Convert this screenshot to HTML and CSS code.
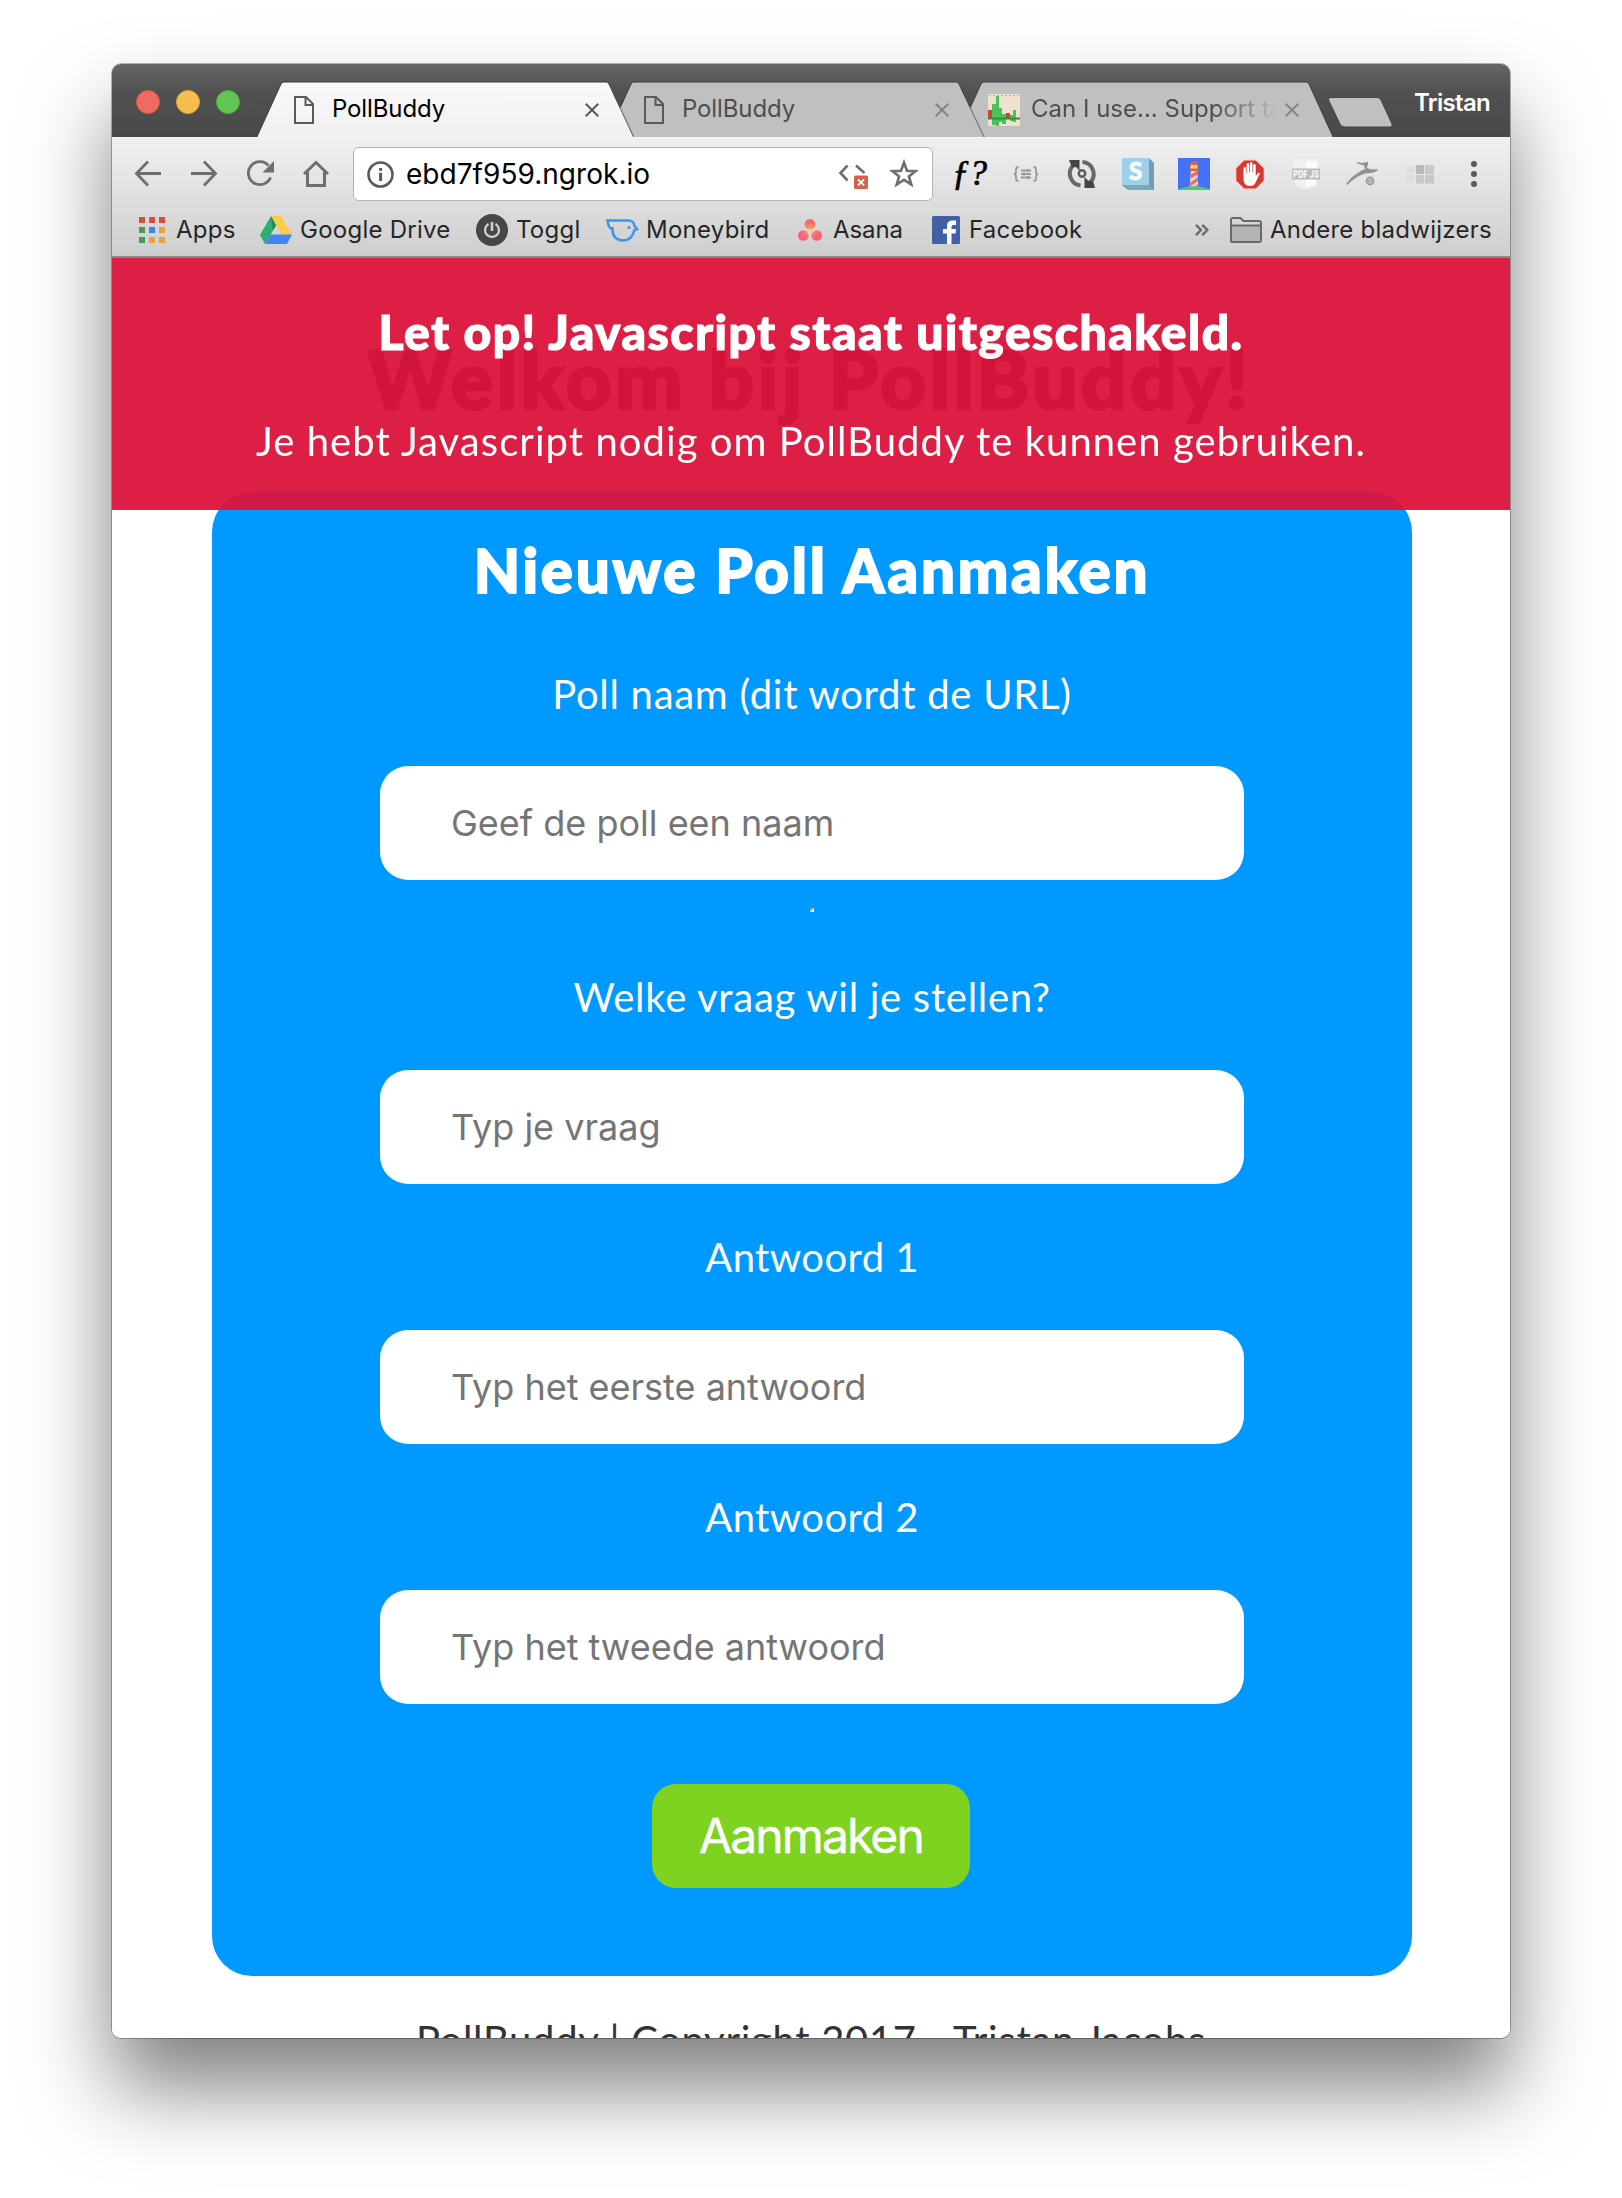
FILE: index.html
```html
<!DOCTYPE html>
<html lang="nl">
<head>
<meta charset="utf-8">
<title>PollBuddy</title>
<link rel="stylesheet" href="styles.css">
</head>
<body>
<div class="window">
  <header class="tabstrip">
    <svg class="tab-shapes" width="1398" height="73" viewBox="112 64 1398 73">
      <defs>
        <linearGradient id="active" x1="0" y1="0" x2="0" y2="1"><stop offset="0" stop-color="#f9f9f9"/><stop offset="1" stop-color="#f0f0f0"/></linearGradient>
      </defs>
      <path d="M955.500 140L981 84Q982 82 984 82H1306Q1308 82 1309 84L1334.500 140Z" fill="#c0c0c0" stroke="#3c3c3c"/>
      <path d="M605.500 140L631 84Q632 82 634 82H956Q958 82 959 84L985.500 140Z" fill="#c0c0c0" stroke="#3c3c3c"/>
      <path d="M970 107L984 137" stroke="#8c8c8c" fill="none"/>
      <path d="M255.500 140L281 84Q282 82 284 82H606Q608 82 609 84L635 140Z" fill="url(#active)" stroke="#3c3c3c"/>
      <path d="M620 107L634 137" stroke="#8c8c8c" fill="none"/>
      <path d="M1331 97.500H1377Q1380 97.500 1381 100L1392 124Q1393 127 1390 127H1345Q1341 127 1340 124L1328.500 100Q1328 97.500 1331 97.500Z" fill="#c0c0c0" stroke="#444"/>
    </svg>
    <div class="lights"><i class="light red"></i><i class="light amber"></i><i class="light green"></i></div>
    <div class="tab tab-1">
      <svg width="20" height="28" viewBox="0 0 20 28"><path d="M1 1H12L19 8V27H1ZM11.500 1V9H19" fill="none" stroke="#5a5a5a" stroke-width="2"/></svg>
      <span class="tab-title">PollBuddy</span>
      <svg class="close" width="14" height="14" viewBox="0 0 14 14"><path d="M.7.7L13.300 13.300M13.300.7L.7 13.300" stroke="#5a5a5a" stroke-width="2"/></svg>
    </div>
    <div class="tab tab-2">
      <svg width="20" height="28" viewBox="0 0 20 28"><path d="M1 1H12L19 8V27H1ZM11.500 1V9H19" fill="none" stroke="#5a5a5a" stroke-width="2"/></svg>
      <span class="tab-title dim">PollBuddy</span>
      <svg class="close" width="14" height="14" viewBox="0 0 14 14"><path d="M.7.7L13.300 13.300M13.300.7L.7 13.300" stroke="#858585" stroke-width="2"/></svg>
    </div>
    <div class="tab tab-3">
      <svg width="32" height="32" viewBox="0 0 32 32"><path fill="#eee2cf" d="M0 0H32V32H0Z"/><path d="M1 1.500H31" stroke="#c9a9a0" stroke-dasharray="2 2"/><path fill="#d0432f" d="M0 16H4V25H0ZM18 19H22V25H18Z"/><path fill="#47c35a" d="M4 10H8V31H4ZM8 2H11V32H8ZM11 14H14V28H11ZM14 20H18V30H14ZM22 21H25V27H22ZM25 16H28V28H25Z"/><path fill="#2f8d3f" d="M0 23.500H32V25.500H0Z"/></svg>
      <span class="tab-title dim fade">Can I use... Support ta</span>
      <svg class="close" width="14" height="14" viewBox="0 0 14 14"><path d="M.7.7L13.300 13.300M13.300.7L.7 13.300" stroke="#858585" stroke-width="2"/></svg>
    </div>
    <span class="profile">Tristan</span>
  </header>

  <div class="chrome">
    <nav class="toolbar">
      <svg class="nav-icons" width="196" height="30" viewBox="134 159 196 30">
        <g fill="none" stroke="#6e6e6e" stroke-width="2.800">
          <path d="M161 173.500H137M148 161.500L136.500 173.500L148 185.500"/>
          <path d="M191 173.500H215M204 161.500L215.500 173.500L204 185.500"/>
          <path d="M270.500 177.500A11.500 11.500 0 1 1 268.500 165.500"/>
          <path d="M304 174L316 162.500L328 174M307.500 172V185.500H324.500V172" stroke-width="3"/>
        </g>
        <path d="M274 161V172.500H262.500Z" fill="#6e6e6e"/>
      </svg>
      <div class="omnibox">
        <svg width="28" height="28" viewBox="0 0 28 28"><circle cx="14.500" cy="14.500" r="12" fill="none" stroke="#5a5a5a" stroke-width="2.600"/><path d="M13.100 8H16.100V10.700H13.100ZM13.100 12.800H16.100V21H13.100Z" fill="#5a5a5a"/></svg>
        <span class="url">ebd7f959.ngrok.io</span>
        <svg class="omni-actions" width="82" height="32" viewBox="838 159 82 32">
          <path d="M847.500 166.500L840.500 174L847.500 181.500M856 166.500L864.500 174" fill="none" stroke="#6e6e6e" stroke-width="2.600"/>
          <rect x="854" y="176.500" width="14" height="13.500" rx="1.500" fill="#d8604c"/><path d="M858 180.300L864 186.300M864 180.300L858 186.300" stroke="#fff" stroke-width="1.900"/>
          <path d="M904 163.500L907 171.700L915.500 172.100L908.900 177.400L911.300 185.600L904 180.900L896.700 185.600L899.100 177.400L892.500 172.100L901 171.700Z" fill="none" stroke="#6e6e6e" stroke-width="2.600"/>
        </svg>
      </div>
      <div class="extensions">
        <span class="fq">ƒ?</span>
        <svg width="26" height="16" viewBox="0 0 26 16"><g fill="none" stroke="#9a9a9a" stroke-width="1.800"><path d="M5.500 1Q3 1 3 3.500V6Q3 8 .8 8Q3 8 3 10V12.500Q3 15 5.500 15M20.500 1Q23 1 23 3.500V6Q23 8 25.200 8Q23 8 23 10V12.500Q23 15 20.500 15M8 4.500H18M8 8H18M8 11.500H18"/></g><path d="M14 3H16V6H14ZM10 6.500H12V9.500H10ZM14 10H16V13H14Z" fill="#9a9a9a"/></svg>
        <svg width="30" height="30" viewBox="0 0 30 30"><g fill="none" stroke="#686868" stroke-width="4"><path d="M13.500 26.500A12 12 0 0 1 6 6.500"/><path d="M15.500 3A12 12 0 0 1 24 22.500"/></g><path d="M2 1H12.500V11.500L9 8L5 8.500ZM17.500 29V18L21 21.500L26 22L28 29Z" fill="#454545"/><circle cx="15" cy="14.500" r="3.200" fill="none" stroke="#5d5d5d" stroke-width="2.500"/></svg>
        <svg width="32" height="32" viewBox="0 0 32 32"><path d="M27 0L32 5V32H6L0 27Z" fill="#6f9fb1"/><path d="M0 0H27V27H0Z" fill="#9fd0ea"/><path d="M0 27H27L32 32H6Z" fill="#7ba9b9"/><text x="13.500" y="21.500" text-anchor="middle" class="s-letter">S</text></svg>
        <svg width="32" height="32" viewBox="0 0 32 32"><path d="M0 0H32V32H0Z" fill="#4470fa"/><path d="M13 11H19L20.500 30H11.500Z" fill="#d9d4ef"/><path d="M12.800 16.500L19.300 13V16.500L12.600 20.500ZM12.200 24.500L19.900 19.500L20 23L12 28.500ZM13 30.500L20.400 26V30.500Z" fill="#ee7047"/><path d="M12.500 7H19.500V11H12.500Z" fill="#ffd95c"/><path d="M12 7Q12 3 16 3Q20 3 20 7ZM11.500 10.500H20.500V13H11.500Z" fill="#e5603d"/><path d="M0 32V31Q16 25.500 32 31V32Z" fill="#4fc66e"/></svg>
        <svg width="30" height="31" viewBox="0 0 30 31"><path d="M9 .8H21L29.300 9V22L21 30.200H9L.7 22V9Z" fill="#d93a2f" stroke="#f4dedb" stroke-width="1.200"/><path d="M8.500 17V9.500Q8.500 8 9.800 8Q11 8 11 9.500V14H11.600V5.500Q11.600 4 13 4Q14.200 4 14.200 5.500V13.500H14.900V4.500Q14.900 3 16.200 3Q17.500 3 17.500 4.500V13.500H18.200V6.500Q18.200 5 19.500 5Q20.700 5 20.700 6.500V17L22.500 14.500Q23.800 13.200 25 14.300L21 22.500Q19.500 27 15 27Q8.500 27 8.500 20Z" fill="#fff"/></svg>
        <svg width="28" height="32" viewBox="0 0 28 32"><path d="M1 1H27L25 28L14 31.500L3 28Z" fill="#f0f0f0"/><path d="M14 3.500H25L23 26L14 29Z" fill="#fdfdfd"/><path d="M0 10.500H28V21.500H0Z" fill="#bababa"/><text x="14" y="19.700" text-anchor="middle" textLength="26" lengthAdjust="spacingAndGlyphs" class="pdf">PDF JS</text></svg>
        <svg width="32" height="26" viewBox="0 0 32 26"><path d="M0 23Q6 15 12 12Q15 9.500 19 8L18 4.500L11 2.500V1L16 2L22 .8V2.500L21 7Q25 9 32 8.500V9.500Q27 12.500 19 12.500Q9 16 1 24Z" fill="#929292"/><circle cx="24" cy="20" r="3.800" fill="#b5b5b5" stroke="#939393" stroke-width="1.200"/></svg>
        <svg width="30" height="19" viewBox="0 0 30 19"><path d="M1 1H9V8H1ZM1 10H9V18H1Z" fill="#dedede"/><path d="M11 0H19V9H11Z" fill="#bababa"/><path d="M20 0H29V9H20ZM11 10H19V18.500H11ZM20 10H29V18.500H20Z" fill="#c8c8c8"/></svg>
        <svg width="6" height="26" viewBox="0 0 6 26"><g fill="#5a5a5a"><circle cx="3" cy="3" r="3"/><circle cx="3" cy="13" r="3"/><circle cx="3" cy="23" r="3"/></g></svg>
      </div>
    </nav>

    <nav class="bookmarks">
      <a class="bm apps"><svg width="26" height="26" viewBox="0 0 26 26"><path fill="#e2483b" d="M0 0h6v6H0zM10 0h6v6h-6zM20 0h6v6h-6z"/><path fill="#4f9558" d="M0 10h6v6H0zM0 20h6v6H0z"/><path fill="#3f87ef" d="M10 10h6v6h-6z"/><path fill="#e5a338" d="M20 10h6v6h-6zM10 20h6v6h-6zM20 20h6v6h-6z"/></svg><span>Apps</span></a>
      <a class="bm"><svg width="32" height="28" viewBox="0 0 32 28"><path d="M11 0L0 19L5 28L16 9.500Z" fill="#2fae72"/><path d="M11 0H21L32 18.500H21.500Z" fill="#fdcb45"/><path d="M10.500 18.500H32L27 28H5Z" fill="#4285f0"/><path d="M11 0L16 9.500L13 14.500Z" fill="#1d8a55"/></svg><span>Google Drive</span></a>
      <a class="bm"><svg width="32" height="32" viewBox="0 0 32 32"><circle cx="16" cy="16" r="16" fill="#464646"/><path d="M12.500 10A7 7 0 1 0 19.500 10" fill="none" stroke="#cfcfcf" stroke-width="2.400"/><path d="M16 8V17" stroke="#cfcfcf" stroke-width="2.600"/></svg><span>Toggl</span></a>
      <a class="bm"><svg width="32" height="24" viewBox="0 0 32 24"><path d="M1.500 2.500H23Q28 3 28.500 8L31 11L28.500 12Q26 22.500 17 22.500Q7 22 6.500 12Q2 9 1.500 2.500ZM6.500 12V9" fill="none" stroke="#3b97ee" stroke-width="2.600"/><circle cx="23" cy="9.500" r="1.500" fill="#3b97ee"/></svg><span>Moneybird</span></a>
      <a class="bm asana"><svg width="24" height="22" viewBox="0 0 24 22"><defs><radialGradient id="as" gradientUnits="userSpaceOnUse" cx="12" cy="11" r="13"><stop offset="0" stop-color="#ffad45"/><stop offset=".7" stop-color="#fb5f7a"/></radialGradient></defs><g fill="url(#as)"><circle cx="12" cy="5.300" r="5.300"/><circle cx="5.300" cy="16.500" r="5.300"/><circle cx="18.700" cy="16.500" r="5.300"/></g></svg><span>Asana</span></a>
      <a class="bm fb"><svg width="28" height="28" viewBox="0 0 28 28"><rect width="28" height="28" rx="1.500" fill="#4460a5"/><path d="M15 28V17.500H11V13H15V10Q15 4.500 20.500 4.500H24V9H21.500Q19.500 9 19.500 11V13H24L23.500 17.500H19.500V28Z" fill="#fff"/></svg><span>Facebook</span></a>
      <a class="bm"><svg width="14" height="12" viewBox="0 0 14 12"><path d="M1 .8L6 6L1 11.200M7.300.8L12.300 6L7.300 11.200" fill="none" stroke="#6a6a6a" stroke-width="2.400"/></svg></a>
      <a class="bm"><svg width="32" height="26" viewBox="0 0 32 26"><path d="M1 24V3Q1 1 3 1H10.500L13.500 4H29Q31 4 31 6V23Q31 25 29 25H3Q1 25 1 24Z" fill="#d6d6d6" stroke="#6a6a6a" stroke-width="2"/><path d="M2 9H30V24H2Z" fill="#b3b3b3"/><path d="M1 8.500H31" stroke="#6a6a6a" stroke-width="2"/></svg><span>Andere bladwijzers</span></a>
    </nav>
  </div>

  <main class="page">
    <div class="warning">
      <h2 class="warning-title">Let op! Javascript staat uitgeschakeld.</h2>
      <p class="warning-text">Je hebt Javascript nodig om PollBuddy te kunnen gebruiken.</p>
    </div>
    <h1 class="welcome">Welkom bij PollBuddy!</h1>
    <form class="panel">
      <h2 class="panel-title">Nieuwe Poll Aanmaken</h2>
      <label class="label first">Poll naam (dit wordt de URL)</label>
      <div class="input">Geef de poll een naam</div>
      <hr class="divider">
      <label class="label question">Welke vraag wil je stellen?</label>
      <div class="input">Typ je vraag</div>
      <label class="label answer">Antwoord 1</label>
      <div class="input">Typ het eerste antwoord</div>
      <label class="label answer">Antwoord 2</label>
      <div class="input">Typ het tweede antwoord</div>
      <div class="button">Aanmaken</div>
    </form>
    <footer class="footer">PollBuddy | Copyright 2017 - Tristan Jacobs</footer>
  </main>
</div>
</body>
</html>
```
FILE: styles.css
```css
* { box-sizing: border-box; }

body {
  margin: 0;
  width: 1622px;
  height: 2198px;
  overflow: hidden;
  background: #fff;
  font-family: Inter, "Liberation Sans", sans-serif;
}

h1, h2, p { margin: 0; }

svg { display: block; flex: none; overflow: visible; }

/* Browser window */
.window {
  width: 1398px;
  height: 1974px;
  margin: 64px 0 0 112px;
  border-radius: 10px;
  box-shadow: 0 0 0 1px rgba(0, 0, 0, .28), 0 50px 84px rgba(0, 0, 0, .5);
}

.tabstrip {
  position: relative;
  display: flex;
  height: 73px;
  border-radius: 9px 9px 0 0;
  background: linear-gradient(#666, #505050 40%, #494949);
}

.tab-shapes { position: absolute; left: 0; top: 0; overflow: hidden; }

.lights {
  display: flex;
  gap: 16px;
  width: 182px;
  padding: 26px 0 0 24px;
}

.light { width: 24px; height: 24px; border-radius: 50%; }
.red { background: #ed6b60; border: 1px solid #dc5548; }
.amber { background: #f6be50; border: 1px solid #dfa33b; }
.green { background: #62c655; border: 1px solid #4daf41; }

.tab {
  position: relative;
  display: flex;
  align-items: center;
  width: 350px;
  height: 56px;
  margin-top: 18px;
  padding-right: 45px;
}

.tab-2 { width: 344px; padding-right: 39px; }
.tab-3 { width: 356px; }

.tab-title {
  margin: -2px 0 0 18px;
  font-size: 24px;
  line-height: 30px;
  letter-spacing: -.12px;
  white-space: nowrap;
  color: #000;
}

.dim { color: #4e4e4e; }

.fade {
  width: 246px;
  margin-left: 11px;
  overflow: hidden;
  letter-spacing: 0;
  -webkit-mask-image: linear-gradient(90deg, #000 74%, transparent);
  mask-image: linear-gradient(90deg, #000 74%, transparent);
}

.close { margin-left: auto; }

.profile {
  margin: 24px 0 0 70px;
  font-size: 24px;
  line-height: 30px;
  font-weight: 600;
  letter-spacing: -.68px;
  color: #fff;
}

/* Toolbar and bookmarks */
.chrome {
  height: 121px;
  border-top: 1px solid #f6f6f6;
  border-bottom: 2px solid #8a8a8a;
  background: linear-gradient(#f0f0f0, #cecece);
}

.toolbar { display: flex; height: 72px; padding: 9px 0 0 22px; }
.nav-icons { margin-top: 12px; }

.omnibox {
  display: flex;
  align-items: center;
  width: 580px;
  height: 54px;
  margin-left: 23px;
  padding: 0 12px;
  border: 1px solid #b3b3b3;
  border-radius: 6px;
  background: #fff;
}

.url { margin-left: 12px; font-size: 28px; line-height: 36px; letter-spacing: .04px; color: #000; }
.omni-actions { margin-left: auto; }

.extensions {
  display: grid;
  grid-template-columns: 60px 54px 55px 56px 57px 57px 54px 59px 66px 6px;
  align-items: center;
  height: 54px;
  margin-left: 20px;
}

.fq {
  margin-left: -1px;
  font: italic 35px/40px "Liberation Serif", serif;
  -webkit-text-stroke: .7px #000;
  color: #000;
}

.s-letter { font: 900 24px Lato, sans-serif; fill: #f4fbff; stroke: #f4fbff; }
.pdf { font: 900 10px Roboto, sans-serif; fill: #f6f6f6; }

.bookmarks {
  display: grid;
  grid-template-columns: 121px 216px 130px 192px 134px 263px 35px 262px;
  align-items: center;
  height: 40px;
  padding-left: 27px;
}

.bm {
  display: flex;
  align-items: center;
  font-size: 24px;
  line-height: 30px;
  letter-spacing: .25px;
  color: #262626;
  white-space: nowrap;
}

.bm span { margin-left: 8px; }
.apps span, .asana span { margin-left: 11px; }
.asana { letter-spacing: -.1px; }
.fb span { margin-left: 9px; }

/* Page */
.page {
  position: relative;
  height: 1780px;
  overflow: hidden;
  border-radius: 0 0 9px 9px;
  background: #fff;
  font-family: Lato, "Open Sans", sans-serif;
  text-align: center;
  white-space: nowrap;
}

.warning {
  position: absolute;
  left: 0;
  top: 0;
  width: 1398px;
  height: 252px;
  padding-top: 44px;
  background: crimson;
  opacity: .95;
  color: #fff;
}

.warning-title {
  font-size: 48px;
  line-height: 60px;
  font-weight: 900;
  letter-spacing: 1.48px;
  -webkit-text-stroke: 1.2px currentColor;
}

.warning-text { margin-top: 49px; font-size: 40px; line-height: 60px; letter-spacing: 1.05px; }

.welcome {
  padding: 70px 3px 0 0;
  font-size: 80px;
  line-height: 100px;
  font-weight: 900;
  letter-spacing: 3.4px;
  -webkit-text-stroke: 2.4px currentColor;
  color: #333;
}

.panel {
  display: flex;
  flex-direction: column;
  align-items: center;
  width: 1200px;
  height: 1484px;
  margin: 64px 0 0 100px;
  padding-top: 38px;
  border-radius: 40px;
  background: #09f;
  color: #fff;
}

.panel-title {
  font-size: 60px;
  line-height: 80px;
  font-weight: 900;
  letter-spacing: 2.75px;
  -webkit-text-stroke: 1.8px currentColor;
}

.label { margin: 43px 0; font-size: 40px; line-height: 60px; letter-spacing: .72px; }
.first { margin: 54px 0 42px; }
.question { margin-top: 55px; }
.answer { letter-spacing: .4px; }

.input {
  width: 864px;
  height: 114px;
  padding-left: 71px;
  border-radius: 28px;
  background: #fff;
  font: 36px/114px Inter, sans-serif;
  color: #757575;
  text-align: left;
}

.divider { width: 4px; height: 4px; margin: 28px 0 0; border: 2px inset #eee; }

.button {
  width: 318px;
  height: 104px;
  margin: 80px 2px 0 0;
  border-radius: 24px;
  background: #7ed321;
  font: 48px/104px Inter, sans-serif;
  letter-spacing: -1.9px;
  -webkit-text-stroke: .4px currentColor;
}

.footer { margin-top: 34px; font-size: 40px; line-height: 60px; letter-spacing: .69px; color: #333; }
```
